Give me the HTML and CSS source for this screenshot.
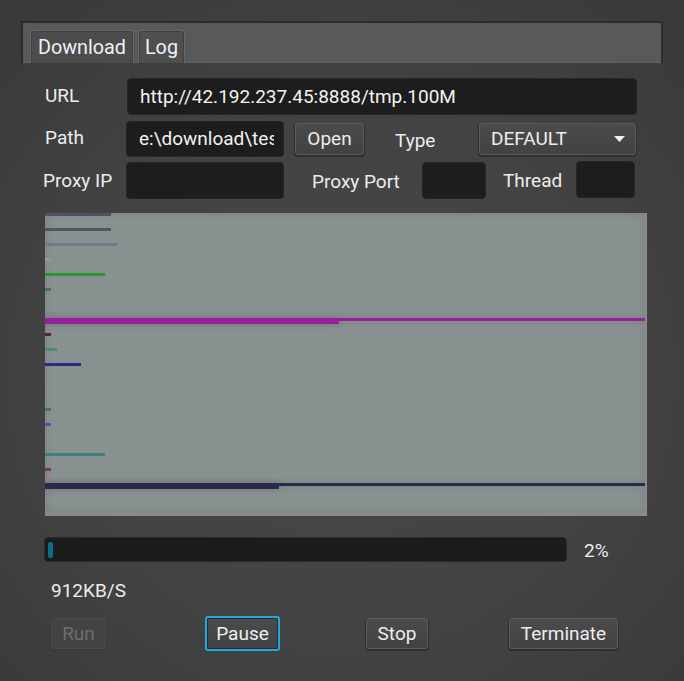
FILE: index.html
```html
<!DOCTYPE html>
<html>
<head>
<meta charset="utf-8">
<link rel="stylesheet" href="styles.css">
</head>
<body>
<div class="app">
  <div class="tab-header">
    <div class="tab tab-download">Download</div>
    <div class="tab tab-log">Log</div>
  </div>
  <div class="content">
    <div class="row row-url">
      <div class="label lbl-url">URL</div>
      <div class="field f-url">http://42.192.237.45:8888/tmp.100M</div>
    </div>
    <div class="row row-path">
      <div class="label lbl-path">Path</div>
      <div class="field f-path"><span class="clip">e:\download\test</span></div>
      <div class="btn btn-open">Open</div>
      <div class="label lbl-type">Type</div>
      <div class="btn combo"><span>DEFAULT</span><svg class="arrow" width="11" height="6" viewBox="0 0 11 6"><polygon points="0,0 11,0 5.5,6" fill="#f2f2f2"/></svg></div>
    </div>
    <div class="row row-proxy">
      <div class="label lbl-proxyip">Proxy IP</div>
      <div class="field f-proxyip"></div>
      <div class="label lbl-port">Proxy Port</div>
      <div class="field f-port"></div>
      <div class="label lbl-thread">Thread</div>
      <div class="field f-thread"></div>
    </div>

    <div class="scroll">
      <div class="canvas">
        <div class="lane"><div class="bar" style="width:66px;background:#4b5261"></div></div>
        <div class="lane"><div class="bar" style="width:66px;background:#4f5667"></div></div>
        <div class="lane"><div class="bar" style="width:72px;background:#6f7b8b"></div></div>
        <div class="lane"><div class="bar" style="width:6px;background:#9c9b8b"></div></div>
        <div class="lane"><div class="bar" style="width:60px;background:#2a982e"></div></div>
        <div class="lane"><div class="bar" style="width:6px;background:#3d7c45"></div></div>
        <div class="lane"></div>
        <div class="lane lane-full"><div class="bar full" style="width:600px;background:#97219a"></div><div class="bar thick" style="width:294px;background:#97219a"></div></div>
        <div class="lane"><div class="bar" style="width:6px;background:#5a2528"></div></div>
        <div class="lane"><div class="bar" style="width:12px;background:#4a8b76"></div></div>
        <div class="lane"><div class="bar" style="width:36px;background:#2b2b82"></div></div>
        <div class="lane"></div>
        <div class="lane"></div>
        <div class="lane"><div class="bar" style="width:6px;background:#3b7a5c"></div></div>
        <div class="lane"><div class="bar" style="width:6px;background:#5a52a0"></div></div>
        <div class="lane"></div>
        <div class="lane"><div class="bar" style="width:60px;background:#3d8080"></div></div>
        <div class="lane"><div class="bar" style="width:6px;background:#8a2b60"></div></div>
        <div class="lane lane-full"><div class="bar full" style="width:600px;background:#2a2a4c"></div><div class="bar thick" style="width:234px;background:#2a2a4c"></div></div>
        <div class="lane"></div>
      </div>
    </div>

    <div class="progress-row">
      <div class="progress"><div class="progress-fill" style="width:5px"></div></div>
      <div class="pct">2%</div>
    </div>
    <div class="speed">912KB/S</div>
    <div class="buttons">
      <div class="btn btn-run disabled">Run</div>
      <div class="btn btn-pause focused">Pause</div>
      <div class="btn btn-stop">Stop</div>
      <div class="btn btn-term">Terminate</div>
    </div>
  </div>
</div>
</body>
</html>
```
FILE: styles.css
```css
* { box-sizing: border-box; }
html, body {
  margin: 0;
  padding: 0;
}
body {
  width: 684px;
  height: 681px;
  overflow: hidden;
  background: radial-gradient(ellipse 70% 70% at 50% 55%, #474747 0%, #434343 55%, #3a3a3a 100%);
  font-family: Roboto, "DejaVu Sans", sans-serif;
  font-size: 19px;
  color: #ededed;
  line-height: 22px;
}
.app {
  padding: 21px 21px 0 21px;
}
.tab-header {
  height: 42px;
  border: 2px solid #2d2d2d;
  border-bottom: 0;
  background: #595959;
  box-shadow: inset 0 -1px 0 #616161;
  display: flex;
  align-items: flex-end;
  gap: 4px;
  padding: 7px 0 0 7px;
}
.tab {
  height: 33px;
  border: 1px solid #676767;
  border-bottom: 0;
  border-radius: 4px 4px 0 0;
  background: #4c4c4c;
  box-shadow: inset 1px 1px 0 #3f3f3f, inset -1px 0 0 #3f3f3f;
  display: flex;
  align-items: center;
  justify-content: center;
  color: #eef1f7;
  font-size: 19.8px;
  padding-top: 1px;
}
.tab-download { width: 104px; }
.tab-log { width: 47px; background: #4f4f4f; }

.content {
  padding: 15px 0 0 24px;
}
.row {
  display: flex;
  align-items: center;
}
.label {
  white-space: nowrap;
  color: #ededed;
}
.field {
  background: #1d1d1d;
  border: 1px solid #252525;
  border-radius: 4px;
  box-shadow: 0 0 0 1px rgba(70,70,70,0.35);
  color: #f2f2f2;
  padding-left: 12px;
  white-space: nowrap;
  overflow: hidden;
  display: flex;
  align-items: center;
}
.row-url { height: 37px; }
.lbl-url { width: 82px; margin-top: -2px; }
.f-url { width: 510px; height: 37px; }

.row-path { height: 36px; margin-top: 6px; }
.lbl-path { width: 81px; margin-top: -2px; }
.f-path { width: 158px; height: 36px; padding-left: 12px; }
.clip {
  display: block;
  width: 135px;
  overflow: hidden;
  white-space: nowrap;
}
.btn-open { margin-left: 11px; width: 69px; height: 32px; }
.lbl-type { margin-left: 31px; width: 84px; padding-top: 4px; }
.combo {
  width: 157px;
  height: 32px;
  justify-content: space-between !important;
  padding: 0 10px 0 11px;
}
.arrow { display: block; }

.row-proxy { height: 37px; margin-top: 5px; }
.lbl-proxyip { width: 83px; margin-left: -2px; }
.f-proxyip { width: 158px; height: 37px; }
.lbl-port { margin-left: 28px; width: 110px; padding-top: 2px; }
.f-port { width: 64px; height: 37px; }
.lbl-thread { margin-left: 17px; width: 73px; }
.f-thread { width: 59px; height: 37px; margin-top: -2px; }

.btn {
  display: flex;
  align-items: center;
  justify-content: center;
  background: linear-gradient(#4b4b4b, #424242);
  border: 1px solid #5c5c5c;
  border-radius: 3px;
  box-shadow: 0 1px 0 1px #2f2f2f;
  color: #ededed;
  white-space: nowrap;
}

.scroll {
  margin-top: 14px;
  width: 602px;
  height: 303px;
  border-right: 2px solid #8b8b8b;
  border-bottom: 3px solid #8b8b8b;
  background: #899090;
  overflow: hidden;
}
.canvas {
  width: 600px;
  height: 300px;
  display: flex;
  flex-direction: column;
  box-shadow: inset 0 0 8px rgba(0,0,0,0.12);
}
.lane {
  height: 15px;
  flex: none;
  display: grid;
  align-content: start;
}
.bar {
  height: 3px;
  grid-area: 1 / 1;
}
.bar.thick {
  height: 6px;
}
.lane-full .bar {
  box-shadow: 0 0 6px rgba(40,40,50,0.2);
}

.progress-row {
  display: flex;
  align-items: center;
  margin-top: 21px;
  margin-left: -1px;
  height: 25px;
}
.progress {
  width: 523px;
  height: 25px;
  background: #1c1c1c;
  border: 1px solid #2a2a2a;
  border-radius: 4px;
  padding: 4px 3px 3px 3px;
  display: flex;
}
.progress-fill {
  height: 16px;
  background: #0c6d88;
  border-radius: 2px;
}
.pct {
  margin-left: 17px;
  padding-top: 2px;
}
.speed {
  margin-top: 18px;
  padding-left: 6px;
}
.buttons {
  display: flex;
  align-items: center;
  height: 35px;
  margin-top: 14px;
}
.btn-run { margin-left: 6px; width: 55px; height: 31px; }
.btn-pause { margin-left: 99px; width: 75px; height: 35px; }
.btn-stop { margin-left: 86px; width: 62px; height: 31px; }
.btn-term { margin-left: 81px; width: 109px; height: 31px; }
.disabled {
  background: #434343;
  border-color: #4a4a4a;
  box-shadow: 0 1px 0 1px #3a3a3a;
  color: #6f6f6f;
}
.focused {
  border: 2px solid #20a8de;
  box-shadow: inset 0 0 0 1px #2c2c2c;
}
```
